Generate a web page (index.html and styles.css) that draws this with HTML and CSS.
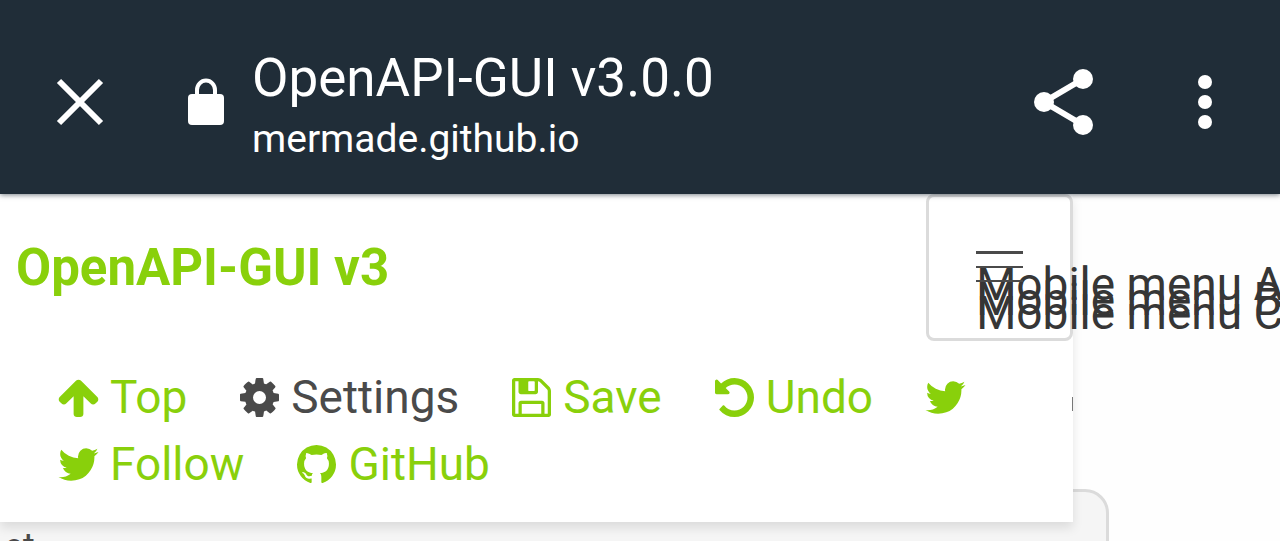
FILE: index.html
```html
<!DOCTYPE html>
<html lang="en">
<head>
  <meta charset="UTF-8">
  <meta name="viewport" content="width=device-width, initial-scale=1.0">
  <title>OpenAPI-GUI v3.0.0</title>
  <link rel="stylesheet" href="styles.css">
</head>
<body>
  <header class="browser-bar">
    <button class="bar-button close" aria-label="Close">
      <svg width="48" height="48" viewBox="0 0 48 48"><path d="M3 3l42 42M45 3L3 45" stroke="#fff" stroke-width="6"/></svg>
    </button>
    <svg class="lock" width="36" height="48" viewBox="0 0 36 48">
      <rect x="0" y="16" width="36" height="31" rx="4" fill="#fff"/>
      <path d="M9 18v-6a9 9.500 0 0 1 18 0v6" fill="none" stroke="#fff" stroke-width="4"/>
    </svg>
    <div class="page-info">
      <div class="page-title">OpenAPI-GUI v3.0.0</div>
      <div class="page-url">mermade.github.io</div>
    </div>
    <button class="bar-button share" aria-label="Share">
      <svg width="60" height="66" viewBox="0 0 60 66" fill="#fff">
        <path d="M49 10L10 33l39 23" fill="none" stroke="#fff" stroke-width="6"/>
        <circle cx="49" cy="10" r="10"/><circle cx="10" cy="33" r="10"/><circle cx="49" cy="56" r="10"/>
      </svg>
    </button>
    <button class="bar-button more" aria-label="More options">
      <svg width="14" height="54" viewBox="0 0 14 54" fill="#fff"><circle cx="7" cy="7" r="7"/><circle cx="7" cy="27" r="7"/><circle cx="7" cy="47" r="7"/></svg>
    </button>
  </header>

  <nav class="navbar">
    <div class="navbar-brand">
      <a class="brand" href="#">OpenAPI-GUI v3</a>
      <button class="burger">
        <span>Mobile menu A</span>
        <span>Mobile menu B</span>
        <span>Mobile menu C</span>
      </button>
    </div>
    <div class="navbar-menu">
      <a class="item" href="#">
        <svg class="icon" viewBox="128 128 1536 1536"><path d="M1675 971q0 51-37 90l-75 75q-38 38-91 38-54 0-90-38l-294-293v704q0 52-37.500 84.500t-90.500 32.500h-128q-53 0-90.500-32.500t-37.500-84.500v-704l-294 293q-36 38-90 38t-90-38l-75-75q-38-38-38-90 0-53 38-91l651-651q35-37 90-37 54 0 91 37l651 651q37 39 37 91z"/></svg>
        Top
      </a>
      <a class="item dark" href="#">
        <svg class="icon" viewBox="128 128 1536 1536"><path d="M1152 896q0-106-75-181t-181-75-181 75-75 181 75 181 181 75 181-75 75-181zm512-109v222q0 12-8 23t-20 13l-185 28q-19 54-39 91 35 50 107 138 10 12 10 25t-9 23q-27 37-99 108t-94 71q-12 0-26-9l-138-108q-44 23-91 38-16 136-29 186-7 28-36 28h-222q-14 0-24.500-8.500t-11.500-21.500l-28-184q-49-16-90-37l-141 107q-10 9-25 9-14 0-25-11-126-114-165-168-7-10-7-23 0-12 8-23 15-21 51-66.500t54-70.500q-27-50-41-99l-183-27q-13-2-21-12.500t-8-23.500v-222q0-12 8-23t19-13l186-28q14-46 39-92-40-57-107-138-10-12-10-24 0-10 9-23 26-36 98.500-107.500t94.500-71.500q13 0 26 10l138 107q44-23 91-38 16-136 29-186 7-28 36-28h222q14 0 24.500 8.500t11.500 21.500l28 184q49 16 90 37l142-107q9-9 24-9 13 0 25 10 129 119 165 170 7 8 7 22 0 12-8 23-15 21-51 66.500t-54 70.500q26 50 41 98l183 28q13 2 21 12.500t8 23.500z"/></svg>
        Settings
      </a>
      <a class="item" href="#">
        <svg class="icon" viewBox="128 128 1536 1536"><path d="M512 1536h768v-384h-768v384zm896 0h128v-896q0-14-10-38.500t-20-34.500l-281-281q-10-10-34-20t-39-10v416q0 40-28 68t-68 28h-576q-40 0-68-28t-28-68v-416h-128v1280h128v-416q0-40 28-68t68-28h832q40 0 68 28t28 68v416zm-384-928v-320q0-13-9.500-22.500t-22.500-9.500h-192q-13 0-22.500 9.500t-9.500 22.500v320q0 13 9.500 22.500t22.500 9.500h192q13 0 22.500-9.500t9.500-22.500zm640 32v928q0 40-28 68t-68 28h-1344q-40 0-68-28t-28-68v-1344q0-40 28-68t68-28h928q40 0 88 20t76 48l280 280q28 28 48 76t20 88z"/></svg>
        Save
      </a>
      <a class="item" href="#">
        <svg class="icon" viewBox="128 128 1536 1536"><path d="M1664 896q0 156-61 298t-164 245-245 164-298 61q-172 0-327-72.500t-264-204.500q-7-10-6.500-22.500t8.500-20.500l137-138q10-9 25-9 16 2 23 12 73 95 179 147t225 52q104 0 198.500-40.500t163.500-109.500 109.500-163.500 40.500-198.500-40.500-198.500-109.500-163.500-163.500-109.500-198.500-40.500q-98 0-188 35.500t-160 101.500l137 138q31 30 14 69-17 40-59 40h-448q-26 0-45-19t-19-45v-448q0-42 40-59 39-17 69 14l130 129q107-101 244.500-156.500t284.500-55.500q156 0 298 61t245 164 164 245 61 298z"/></svg>
        Undo
      </a>
      <a class="item" href="#" aria-label="Tweet">
        <svg class="icon" viewBox="128 128 1536 1536"><path d="M1684 408q-67 98-162 167 1 14 1 42 0 130-38 259.500t-115.500 248.500-184.500 210.500-258 146-323 54.500q-271 0-496-145 35 4 78 4 225 0 401-138-105-2-188-64.500t-114-159.500q33 5 61 5 43 0 85-11-112-23-185.500-111.500t-73.500-205.500v-4q68 38 146 41-66-44-105-115t-39-154q0-88 44-163 121 149 294.500 238.500t371.500 99.500q-8-38-8-74 0-134 94.500-228.500t228.500-94.500q140 0 236 102 109-21 205-78-37 115-142 178 93-10 186-50z"/></svg>
      </a>
      <a class="item" href="#">
        <svg class="icon" viewBox="128 128 1536 1536"><path d="M1684 408q-67 98-162 167 1 14 1 42 0 130-38 259.500t-115.500 248.500-184.500 210.500-258 146-323 54.500q-271 0-496-145 35 4 78 4 225 0 401-138-105-2-188-64.500t-114-159.500q33 5 61 5 43 0 85-11-112-23-185.500-111.500t-73.500-205.500v-4q68 38 146 41-66-44-105-115t-39-154q0-88 44-163 121 149 294.500 238.500t371.500 99.500q-8-38-8-74 0-134 94.500-228.500t228.500-94.500q140 0 236 102 109-21 205-78-37 115-142 178 93-10 186-50z"/></svg>
        Follow
      </a>
      <a class="item" href="#">
        <svg class="icon" viewBox="128 128 1536 1536"><path d="M896 128q209 0 385.500 103t279.500 279.500 103 385.500q0 251-146.500 451.500t-378.500 277.500q-27 5-40-7t-13-30q0-3 .5-76.500t.5-134.500q0-97-52-142 57-6 102.500-18t94-39 81-66.500 53-105 20.500-150.500q0-119-79-206 37-91-8-204-28-9-81 11t-92 44l-38 24q-93-26-192-26t-192 26q-16-11-42.500-27t-83.500-38.500-85-13.500q-45 113-8 204-79 87-79 206 0 85 20.500 150t52.500 105 80.500 67 94 39 102.500 18q-39 36-49 103-21 10-45 15t-57 5-65.500-21.500-55.500-62.500q-19-32-48.500-52t-49.500-24l-20-3q-21 0-29 4.500t-5 11.500 9 14 13 12l7 5q22 10 43.500 38t31.500 51l10 23q13 38 44 61.500t67 30 69.500 7 55.500-3.500l23-4q0 38 .5 88.500t.5 54.500q0 18-13 30t-40 7q-232-77-378.500-277.500t-146.500-451.500q0-209 103-385.500t279.500-279.500 385.500-103z"/></svg>
        GitHub
      </a>
    </div>
  </nav>

  <main class="panel">et</main>
</body>
</html>
```

FILE: styles.css
```css
html,
body {
  height: 100%;
}

body {
  margin: 0;
  font-family: Roboto, sans-serif;
  font-size: 46px;
  color: #4a4a4a;
  background-color: #fefefe;
  overflow: hidden;
}

button {
  background: none;
  border: 0;
  padding: 0;
  font: inherit;
}

svg {
  display: block;
}

.browser-bar {
  position: relative;
  z-index: 3;
  display: flex;
  align-items: center;
  box-sizing: border-box;
  padding: 41px 68px 31px 56px;
  background-color: #202d38;
  color: #fff;
  box-shadow: 0 1px 5px rgba(32, 45, 56, 0.6);
}

.lock {
  margin: 0 28px 0 84px;
}

.page-info {
  flex: 1;
}

.page-title {
  font-size: 53px;
  line-height: 74px;
}

.page-url {
  font-size: 39px;
  line-height: 48px;
}

.share {
  margin-right: 104px;
}

.navbar {
  position: relative;
  z-index: 2;
  width: calc(84% - 2px);
  box-sizing: border-box;
  padding-bottom: 24px;
  background-color: #fff;
  box-shadow: 0 6px 10px rgba(10, 10, 10, 0.1);
}

.navbar::after {
  content: "";
  position: absolute;
  right: 0;
  top: 203px;
  width: 1px;
  height: 14px;
  background-color: #777;
}

.navbar-brand {
  display: flex;
  align-items: center;
  justify-content: space-between;
  padding-left: 16px;
}

.brand {
  color: #89d00b;
  font-size: 51px;
  font-weight: bold;
  text-decoration: none;
}

.burger {
  display: flex;
  flex-direction: column;
  gap: 12px;
  box-sizing: border-box;
  width: 147px;
  height: 147px;
  padding: 54px 47px;
  border: 3px solid #dbdbdb;
  border-radius: 8px;
  color: #363636;
  text-align: left;
}

/* each bar keeps its label, which spills below it */
.burger span {
  display: block;
  height: 2px;
  background-color: #4a4a4a;
  line-height: 66px;
  white-space: nowrap;
}

.burger span:first-child {
  height: 3px;
}

.navbar-menu {
  display: flex;
  flex-wrap: wrap;
  column-gap: 53px;
  padding: 23px 40px 0 59px;
}

.item {
  display: flex;
  align-items: center;
  gap: 12px;
  line-height: 67px;
  min-height: 67px;
  color: #89d00b;
  text-decoration: none;
}

.item.dark {
  color: #4a4a4a;
}

.icon {
  width: 39px;
  height: 39px;
  fill: currentColor;
  overflow: visible;
}

.panel {
  box-sizing: border-box;
  width: 88%;
  margin: -33px 0 0 -17px;
  padding: 33px 18px;
  border: 3px solid #dbdbdb;
  border-radius: 24px;
  background-color: #f5f5f5;
  font-size: 36px;
  line-height: 44px;
}
```
